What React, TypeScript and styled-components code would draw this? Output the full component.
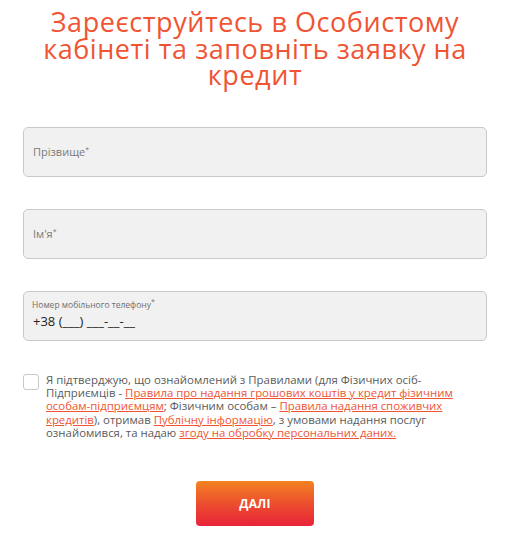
import * as React from 'react';
import styled, { createGlobalStyle } from 'styled-components';

const GlobalStyle = createGlobalStyle`
  html, body {
    margin: 0;
    padding: 0;
    background: #fff;
  }
  body {
    font-family: 'Open Sans', 'Liberation Sans', sans-serif;
  }
`;

const ACCENT = '#f05433';

export default function App() {
  return (
    <>
      <GlobalStyle />
      <Page>
        <Title>Зареєструйтесь в Особистому кабінеті та заповніть заявку на кредит</Title>
        <Form>
          <Field>
            <Label>
              Прізвище<Star>*</Star>
            </Label>
          </Field>
          <Field>
            <Label>
              Ім'я<Star>*</Star>
            </Label>
          </Field>
          <Field phone>
            <SmallLabel>
              Номер мобільного телефону<Star>*</Star>
            </SmallLabel>
            <PhoneValue>+38 (___) ___-__-__</PhoneValue>
          </Field>
          <Agreement>
            <Checkbox />
            <AgreeText>
              Я підтверджую, що ознайомлений з Правилами (для Фізичних осіб-Підприємців -{' '}
              <Link href='#'>Правила про надання грошових коштів у кредит фізичним особам-підприємцям</Link>; Фізичним
              особам – <Link href='#'>Правила надання споживчих кредитів</Link>), отримав{' '}
              <Link href='#'>Публічну інформацію</Link>, з умовами надання послуг ознайомився, та надаю{' '}
              <Link href='#'>згоду на обробку персональних даних.</Link>
            </AgreeText>
          </Agreement>
        </Form>
        <Submit type='button'>ДАЛІ</Submit>
      </Page>
    </>
  );
}

const Page = styled.div`
  width: 509px;
  padding: 9px 22px 14px 23px;
  box-sizing: border-box;
  display: flex;
  flex-direction: column;
  align-items: center;
`;

const Title = styled.h1`
  margin: 0;
  width: 464px;
  font-size: 27px;
  line-height: 26.5px;
  letter-spacing: 0.55px;
  font-weight: 400;
  color: ${ACCENT};
  text-align: center;
`;

const Form = styled.div`
  width: 100%;
  margin-top: 38px;
  display: flex;
  flex-direction: column;
  gap: 32px;
`;

const Field = styled.div<{ phone?: boolean }>`
  height: 50px;
  box-sizing: border-box;
  background: #f1f1f1;
  border: 1px solid #c9c9c9;
  border-radius: 5px;
  display: flex;
  flex-direction: column;
  justify-content: ${(p) => (p.phone ? 'flex-start' : 'center')};
  padding: ${(p) => (p.phone ? '4px 0 0 8px' : '0 0 0 9px')};
`;

const Label = styled.div`
  font-size: 11px;
  color: #7a7a7a;
`;

const SmallLabel = styled.div`
  font-size: 8.5px;
  color: #6f6f6f;
  line-height: 11px;
`;

const Star = styled.sup`
  font-size: 7px;
  vertical-align: 4px;
`;

const PhoneValue = styled.div`
  margin-top: 2px;
  font-size: 13px;
  color: #222;
  padding-left: 1px;
`;

const Agreement = styled.div`
  display: flex;
  gap: 7px;
  align-items: flex-start;
`;

const Checkbox = styled.span`
  flex: none;
  width: 16px;
  height: 16px;
  margin-top: 1px;
  box-sizing: border-box;
  border: 1px solid #c8c8c8;
  border-radius: 3px;
  background: #fff;
`;

const AgreeText = styled.p`
  margin: 0;
  font-size: 11.4px;
  line-height: 13.4px;
  color: #5b5b5b;
`;

const Link = styled.a`
  color: ${ACCENT};
  text-decoration: underline;
`;

const Submit = styled.button`
  margin-top: 41px;
  width: 118px;
  height: 45px;
  border: none;
  border-radius: 4px;
  background: linear-gradient(180deg, #f38221 0%, #ec4a2f 55%, #e8233a 100%);
  color: #fff;
  font-family: inherit;
  font-size: 12px;
  font-weight: 700;
  letter-spacing: 0.3px;
  cursor: pointer;
`;
